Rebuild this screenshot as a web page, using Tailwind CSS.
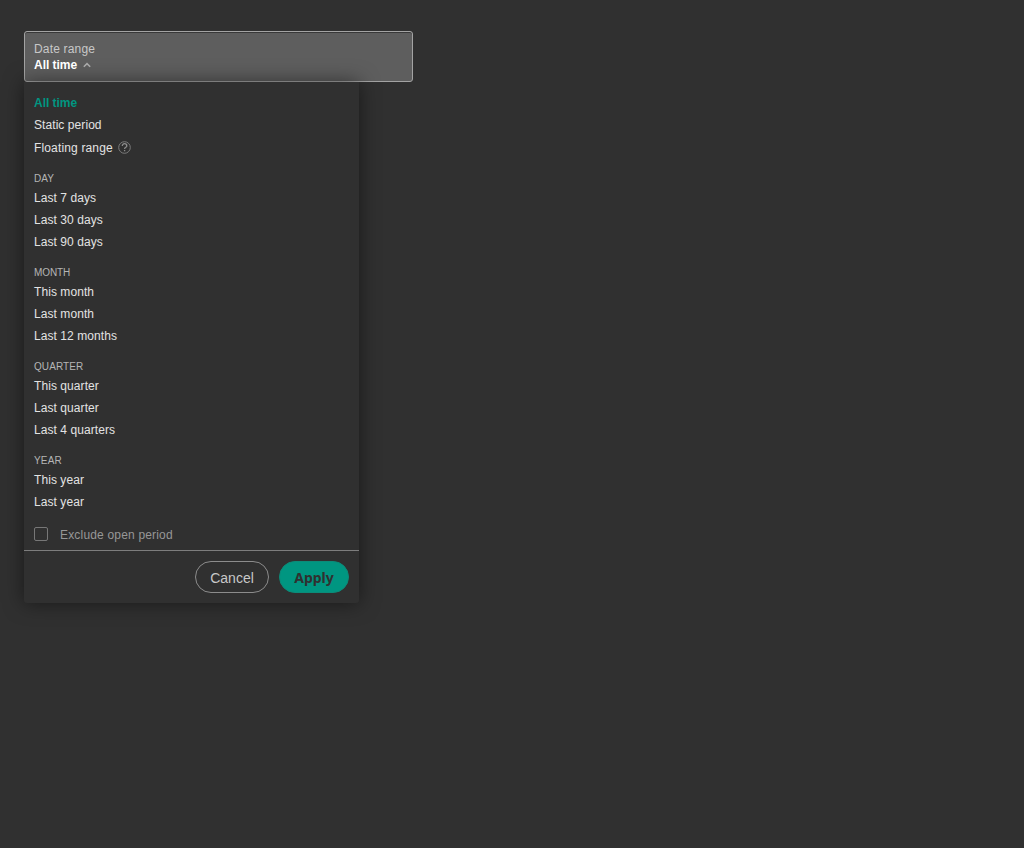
<!DOCTYPE html>
<html lang="en">
<head>
<meta charset="utf-8">
<title>Date range</title>
<script src="https://cdn.jsdelivr.net/npm/@tailwindcss/browser@4"></script>
</head>
<body class="bg-[#303030] h-screen overflow-hidden px-6 pt-[31px] font-['Liberation_Sans',sans-serif] text-xs text-[#e3e3e3]">
  <button class="flex flex-col justify-start items-start w-[389px] h-[51px] rounded-[3px] border border-[#a3a3a3] bg-[#5e5e5e] shadow-[inset_0_1px_0_#383838] pl-[9px] pt-[9px] text-left leading-4">
    <span class="block text-[#c8c8c8] tracking-[0.17px]">Date range</span>
    <span class="flex items-center font-bold text-white tracking-[-0.04px]">All time
      <svg class="ml-1.5 size-2" viewBox="0 0 8 8" fill="none" stroke="#aaa" stroke-width="1.5"><path d="M.8 5.8 4 2.6l3.2 3.2"/></svg>
    </span>
  </button>
  <div class="w-[335px] h-[521px] rounded-b-[3px] bg-[#303030] shadow-[0_0_20px_rgba(0,0,0,0.5)] flex flex-col">
    <div class="h-[468px] px-2.5 pt-2.5 leading-[22px] tracking-[0.07px]">
      <div class="font-bold text-[#009681] tracking-[-0.04px]">All time</div>
      <div>Static period</div>
      <div class="h-6 leading-6 flex items-center"><span class="tracking-[0.15px]">Floating range</span>
        <svg class="ml-[5.5px] mb-[2px] size-[13px]" viewBox="0 0 13 13" fill="none" stroke="#7c7c7c" stroke-width="1"><circle cx="6.5" cy="6.5" r="5.8"/><path stroke="#8c8c8c" stroke-width="1.3" d="M4.3 4.9c0-3 4.5-2.8 4.5 0 0 1.4-2.2 1.5-2.2 3.1M6.6 9v1.3"/></svg>
      </div>
      <div class="mt-[7px] h-5 pt-1.5 text-[10px] leading-3 text-[#b5b5b5]">DAY</div>
      <div>Last 7 days</div><div>Last 30 days</div><div>Last 90 days</div>
      <div class="mt-2 h-5 pt-1.5 text-[10px] leading-3 text-[#b5b5b5] tracking-[-0.1px]">MONTH</div>
      <div>This month</div><div>Last month</div><div>Last 12 months</div>
      <div class="mt-2 h-5 pt-1.5 text-[10px] leading-3 text-[#b5b5b5]">QUARTER</div>
      <div>This quarter</div><div>Last quarter</div><div>Last 4 quarters</div>
      <div class="mt-2 h-5 pt-1.5 text-[10px] leading-3 text-[#b5b5b5] tracking-[0.2px]">YEAR</div>
      <div>This year</div><div>Last year</div>
      <div class="mt-[11px] flex items-center gap-3 text-[#979797] tracking-[0.18px]"><span class="mb-0.5 size-3.5 rounded-[2px] border border-[#777]"></span>Exclude open period</div>
    </div>
    <div class="h-[53px] border-t border-[#7d7d7d] flex justify-end gap-2.5 px-2.5 pt-2.5 text-sm">
      <button class="w-[74px] h-8 rounded-full border border-[#8c8c8c] text-[#c8c8c8] pt-0.5">Cancel</button>
      <button class="w-[70px] h-8 rounded-full border border-[#0c8b79] bg-[#009681] font-['Noto_Sans',sans-serif] text-[#303030] font-bold pt-0.5">Apply</button>
    </div>
  </div>
</body>
</html>
